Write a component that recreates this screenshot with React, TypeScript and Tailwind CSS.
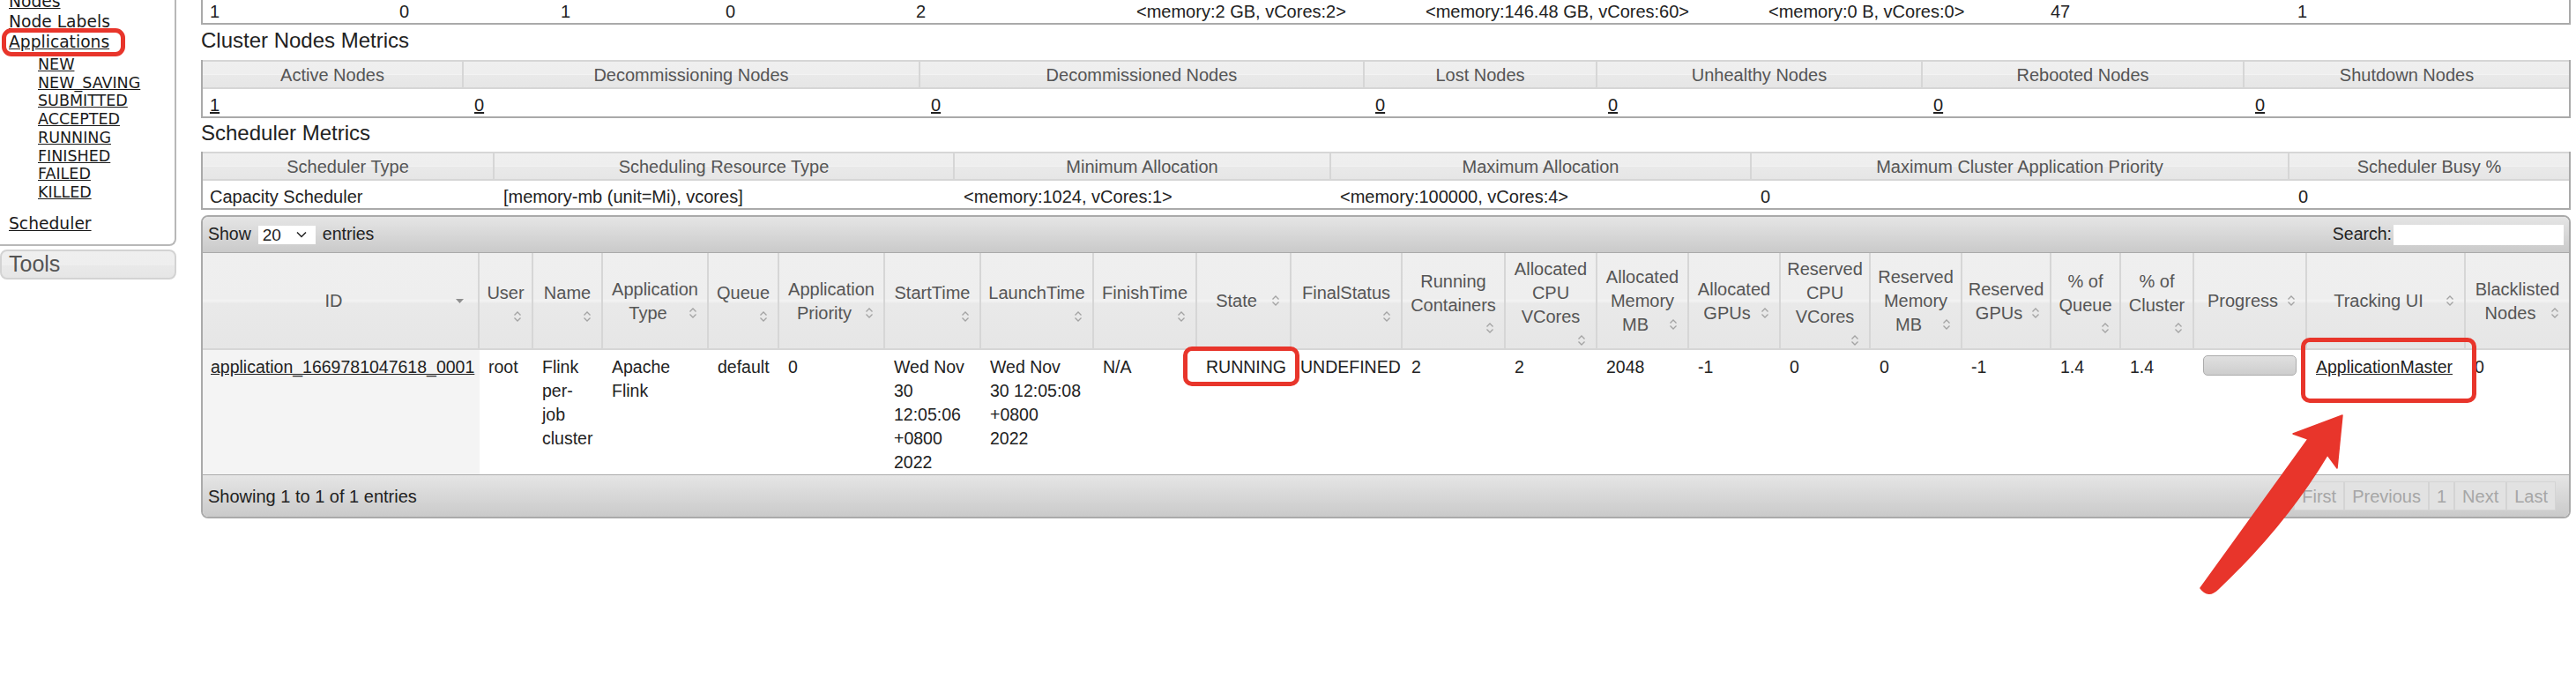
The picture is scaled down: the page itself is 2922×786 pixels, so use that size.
import React from "react";

const F = "font-['Liberation_Sans',Arial,sans-serif]";
const SIDE = "font-['DejaVu_Sans',Verdana,sans-serif]";
const HEADBG =
  "bg-[linear-gradient(180deg,#efefef_0%,#eeeeee_48%,#f3f3f3_50%,#e9e9e9_53%,#e6e6e6_100%)]";

function SortIcon({ cls = "" }: { cls?: string }) {
  return (
    <svg width="12" height="16" viewBox="0 0 12 16" className={"block shrink-0 " + cls}>
      <path d="M2.5 6.5 L6 3 L9.5 6.5" fill="none" stroke="#a3a3a3" strokeWidth="1.3" />
      <path d="M2.5 9.5 L6 13 L9.5 9.5" fill="none" stroke="#a3a3a3" strokeWidth="1.3" />
    </svg>
  );
}

type Head = { w: string; lines: string[]; icon: number };

const heads: Head[] = [
  { w: "w-[61px]", lines: ["User"], icon: 1 },
  { w: "w-[79px]", lines: ["Name"], icon: 1 },
  { w: "w-[120px]", lines: ["Application", "Type"], icon: 1 },
  { w: "w-[80px]", lines: ["Queue"], icon: 1 },
  { w: "w-[120px]", lines: ["Application", "Priority"], icon: 1 },
  { w: "w-[109px]", lines: ["StartTime"], icon: 1 },
  { w: "w-[128px]", lines: ["LaunchTime"], icon: 1 },
  { w: "w-[117px]", lines: ["FinishTime"], icon: 1 },
  { w: "w-[107px]", lines: ["State"], icon: 0 },
  { w: "w-[126px]", lines: ["FinalStatus"], icon: 1 },
  { w: "w-[117px]", lines: ["Running", "Containers"], icon: 2 },
  { w: "w-[104px]", lines: ["Allocated", "CPU", "VCores"], icon: 3 },
  { w: "w-[104px]", lines: ["Allocated", "Memory", "MB"], icon: 2 },
  { w: "w-[104px]", lines: ["Allocated", "GPUs"], icon: 1 },
  { w: "w-[102px]", lines: ["Reserved", "CPU", "VCores"], icon: 3 },
  { w: "w-[104px]", lines: ["Reserved", "Memory", "MB"], icon: 2 },
  { w: "w-[101px]", lines: ["Reserved", "GPUs"], icon: 1 },
  { w: "w-[79px]", lines: ["% of", "Queue"], icon: 2 },
  { w: "w-[83px]", lines: ["% of", "Cluster"], icon: 2 },
  { w: "w-[128px]", lines: ["Progress"], icon: 0 },
  { w: "w-[180px]", lines: ["Tracking UI"], icon: 0 },
  { w: "w-[117px]", lines: ["Blacklisted", "Nodes"], icon: 1 },
];

const topCols = [
  { w: "w-[214px]", v: "1" },
  { w: "w-[183px]", v: "0" },
  { w: "w-[187px]", v: "1" },
  { w: "w-[216px]", v: "0" },
  { w: "w-[250px]", v: "2" },
  { w: "w-[328px]", v: "<memory:2 GB, vCores:2>" },
  { w: "w-[389px]", v: "<memory:146.48 GB, vCores:60>" },
  { w: "w-[320px]", v: "<memory:0 B, vCores:0>" },
  { w: "w-[280px]", v: "47" },
  { w: "w-[317px]", v: "1" },
];

const nodeCols = [
  { w: "w-[296px]", h: "Active Nodes" },
  { w: "w-[518px]", h: "Decommissioning Nodes" },
  { w: "w-[504px]", h: "Decommissioned Nodes" },
  { w: "w-[264px]", h: "Lost Nodes" },
  { w: "w-[369px]", h: "Unhealthy Nodes" },
  { w: "w-[365px]", h: "Rebooted Nodes" },
  { w: "w-[368px]", h: "Shutdown Nodes" },
];
const nodeVals = ["1", "0", "0", "0", "0", "0", "0"];

const schedCols = [
  { w: "w-[331px]", h: "Scheduler Type", v: "Capacity Scheduler" },
  { w: "w-[522px]", h: "Scheduling Resource Type", v: "[memory-mb (unit=Mi), vcores]" },
  { w: "w-[427px]", h: "Minimum Allocation", v: "<memory:1024, vCores:1>" },
  { w: "w-[477px]", h: "Maximum Allocation", v: "<memory:100000, vCores:4>" },
  { w: "w-[610px]", h: "Maximum Cluster Application Priority", v: "0" },
  { w: "w-[317px]", h: "Scheduler Busy %", v: "0" },
];

const smallTh =
  "pt-[2px] pb-[1px] border-t-2 border-b-2 border-[#d6d6d6] text-[20px] leading-[26px] font-normal text-[#555] text-center whitespace-nowrap " +
  HEADBG;

function App() {
  const dataCells: React.ReactNode[] = [
    "root",
    <>
      Flink
      <br />
      per-
      <br />
      job
      <br />
      cluster
    </>,
    <>
      Apache
      <br />
      Flink
    </>,
    "default",
    "0",
    <>
      Wed Nov
      <br />
      30
      <br />
      12:05:06
      <br />
      +0800
      <br />
      2022
    </>,
    <>
      Wed Nov
      <br />
      30 12:05:08
      <br />
      +0800
      <br />
      2022
    </>,
    "N/A",
    "RUNNING",
    "UNDEFINED",
    "2",
    "2",
    "2048",
    "-1",
    "0",
    "0",
    "-1",
    "1.4",
    "1.4",
    <div className="w-[106px] h-[23px] rounded-[5px] border border-[#ababab] bg-[linear-gradient(180deg,#e0e0e0,#cdcdcd)]" />,
    <a className="underline">ApplicationMaster</a>,
    "0",
  ];

  return (
    <div className="relative w-[2922px] h-[786px] overflow-hidden bg-white flex items-start">
      {/* Sidebar */}
      <div className="w-[200px] shrink-0">
        <div className={"border-r-2 border-b-2 border-[#b8b8b8] rounded-br-[8px] pb-[12px] text-[#1a1a1a] " + SIDE}>
          <div className="-mt-[10px] pl-[10px] text-[18.7px] leading-[23px]">
            <a className="block underline">Nodes</a>
            <a className="block underline">Node Labels</a>
            <a className="block underline">Applications</a>
          </div>
          <ul className="mt-[4px] pl-[43px] text-[17.5px] leading-[20.7px]">
            {["NEW", "NEW_SAVING", "SUBMITTED", "ACCEPTED", "RUNNING", "FINISHED", "FAILED", "KILLED"].map((s) => (
              <li key={s}>
                <a className="underline">{s}</a>
              </li>
            ))}
          </ul>
          <a className="block mt-[13px] pl-[10px] text-[18.7px] leading-[23px] underline">Scheduler</a>
        </div>
        <div
          className={
            "mt-[4px] h-[34px] rounded-[8px] border-2 border-[#d3d3d3] flex items-center pl-[8px] text-[25px] text-[#555] " +
            F +
            " " +
            HEADBG
          }
        >
          Tools
        </div>
      </div>

      {/* Main */}
      <div className={"ml-[28px] w-[2688px] text-[#222] " + F}>
        {/* top (cluster metrics) row, scrolled */}
        <div className="border-x-2 border-b-2 border-[#aaaaaa]">
          <table className="w-full table-fixed border-separate border-spacing-0">
            <colgroup>
              {topCols.map((c, i) => (
                <col key={i} className={c.w} />
              ))}
            </colgroup>
            <tbody>
              <tr>
                {topCols.map((c, i) => (
                  <td
                    key={i}
                    className={"h-[26px] p-0 text-[20px] leading-[26px] whitespace-nowrap " + (i === 0 ? "pl-[8px]" : "pl-[9px]")}
                  >
                    {c.v}
                  </td>
                ))}
              </tr>
            </tbody>
          </table>
        </div>

        <h2 className="text-[24px] leading-[33px] pt-[1px] pb-[6px] font-normal">Cluster Nodes Metrics</h2>
        <div className="border-x-2 border-b-2 border-[#aaaaaa]">
          <table className="w-full table-fixed border-separate border-spacing-0">
            <colgroup>
              {nodeCols.map((c, i) => (
                <col key={i} className={c.w} />
              ))}
            </colgroup>
            <thead>
              <tr>
                {nodeCols.map((c, i) => (
                  <th key={i} className={smallTh + (i < nodeCols.length - 1 ? " border-r-2" : "")}>
                    {c.h}
                  </th>
                ))}
              </tr>
            </thead>
            <tbody>
              <tr>
                {nodeVals.map((v, i) => (
                  <td
                    key={i}
                    className={"pt-[5px] pb-0 text-[20px] leading-[26px] " + (i === 0 ? "pl-[8px]" : "pl-[12px]")}
                  >
                    <a className="underline">{v}</a>
                  </td>
                ))}
              </tr>
            </tbody>
          </table>
        </div>

        <h2 className="text-[24px] leading-[33px] pb-[5px] font-normal">Scheduler Metrics</h2>
        <div className="border-x-2 border-b-2 border-[#aaaaaa]">
          <table className="w-full table-fixed border-separate border-spacing-0">
            <colgroup>
              {schedCols.map((c, i) => (
                <col key={i} className={c.w} />
              ))}
            </colgroup>
            <thead>
              <tr>
                {schedCols.map((c, i) => (
                  <th key={i} className={smallTh + (i < schedCols.length - 1 ? " border-r-2" : "")}>
                    {c.h}
                  </th>
                ))}
              </tr>
            </thead>
            <tbody>
              <tr>
                {schedCols.map((c, i) => (
                  <td
                    key={i}
                    className={"pt-[5px] pb-0 text-[20px] leading-[26px] whitespace-nowrap " + (i === 0 ? "pl-[8px]" : "pl-[10px]")}
                  >
                    {c.v}
                  </td>
                ))}
              </tr>
            </tbody>
          </table>
        </div>

        {/* Applications data table */}
        <div className="mt-[6px] border-2 border-[#aaaaaa] rounded-[8px] overflow-hidden">
          <div className="h-[41px] border-b border-[#aaaaaa] bg-[linear-gradient(180deg,#e5e5e5,#cacaca)] flex items-center justify-between pl-[6px] pr-[6px] text-[19.5px] text-[#222]">
            <div className="flex items-center">
              <span>Show</span>
              <div className="ml-[8px] mr-[8px] w-[65px] h-[21px] bg-white flex items-center justify-between pl-[5px] pr-[10px]">
                <span className="text-[19px] leading-[21px]">20</span>
                <svg width="12" height="8" viewBox="0 0 12 8">
                  <path d="M1 1.5 L6 6.5 L11 1.5" fill="none" stroke="#222" strokeWidth="1.5" />
                </svg>
              </div>
              <span>entries</span>
            </div>
            <div className="flex items-center">
              <span>Search:</span>
              <div className="ml-[2px] w-[193px] h-[23px] bg-white" />
            </div>
          </div>

          <table className="w-full table-fixed border-separate border-spacing-0">
            <colgroup>
              <col className="w-[314px]" />
              {heads.map((h, i) => (
                <col key={i} className={h.w} />
              ))}
            </colgroup>
            <thead>
              <tr>
                <th
                  className={
                    "h-[110px] p-0 pl-[10px] pr-[10px] align-middle font-normal text-[20px] text-[#555] border-b-2 border-r-2 border-[#d6d6d6] " +
                    HEADBG
                  }
                >
                  <div className="flex items-center">
                    <span className="flex-1 text-center">ID</span>
                    <svg width="9" height="5" viewBox="0 0 9 5" className="mr-[6px]">
                      <path d="M0 0 L9 0 L4.5 5 Z" fill="#8f8f8f" />
                    </svg>
                  </div>
                </th>
                {heads.map((h, i) => (
                  <th
                    key={i}
                    className={
                      "h-[110px] p-0 px-[6px] align-middle font-normal text-[20px] text-[#555] border-b-2 border-[#d6d6d6] " +
                      (i < heads.length - 1 ? "border-r-2 " : "") +
                      HEADBG
                    }
                  >
                    <div className="flex flex-col">
                      {h.lines.map((t, j) => (
                        <div key={j} className="flex h-[27px] items-center">
                          <span className="flex-1 text-center whitespace-nowrap">{t}</span>
                          {h.icon === j && <SortIcon cls="mr-[4px]" />}
                        </div>
                      ))}
                      {h.icon === h.lines.length && (
                        <div className="flex h-[18px] justify-end items-start">
                          <SortIcon cls="mt-[5px] mr-[4px]" />
                        </div>
                      )}
                    </div>
                  </th>
                ))}
              </tr>
            </thead>
            <tbody>
              <tr>
                <td className="h-[141px] align-top pt-[6px] pl-[9px] pr-0 text-[19.5px] leading-[27px] whitespace-nowrap bg-[#f4f4f4]">
                  <a className="underline">application_1669781047618_0001</a>
                </td>
                {dataCells.map((c, i) => (
                  <td
                    key={i}
                    className="h-[141px] align-top pt-[6px] pl-[10px] pr-0 text-[19.5px] leading-[27px] whitespace-nowrap"
                  >
                    {c}
                  </td>
                ))}
              </tr>
            </tbody>
          </table>

          <div className="h-[48px] border-t border-[#aaaaaa] bg-[linear-gradient(180deg,#e5e5e5,#cacaca)] flex items-center justify-between pl-[6px] pr-[15px] text-[20px]">
            <span className="text-[#222]">Showing 1 to 1 of 1 entries</span>
            <div className="flex h-[33px] text-[#a6a6a6]">
              {["First", "Previous", "1", "Next", "Last"].map((b) => (
                <span
                  key={b}
                  className="flex items-center px-[8px] border border-[#d4d4d4] bg-[#e2e2e2]"
                >
                  {b}
                </span>
              ))}
            </div>
          </div>
        </div>
      </div>

      {/* annotations */}
      <div className="absolute left-[2px] top-[32px] w-[140px] h-[32px] border-[5px] border-[#e8352b] rounded-[11px]" />
      <div className="absolute left-[1342px] top-[393px] w-[132px] h-[45px] border-[5px] border-[#e8352b] rounded-[10px]" />
      <div className="absolute left-[2610px] top-[383px] w-[199px] h-[74px] border-[5px] border-[#e8352b] rounded-[10px]" />
      <svg
        className="absolute left-0 top-0 pointer-events-none"
        width="2922"
        height="786"
        viewBox="0 0 2922 786"
      >
        <path
          d="M2657,471 L2651,531 L2640,516 Q2592,596 2516,668 Q2505,679 2496,667 L2618,498 L2601,492 Z"
          fill="#e8352b"
          stroke="#e8352b"
          strokeWidth="1.5"
          strokeLinejoin="round"
        />
      </svg>
    </div>
  );
}

export default App;
